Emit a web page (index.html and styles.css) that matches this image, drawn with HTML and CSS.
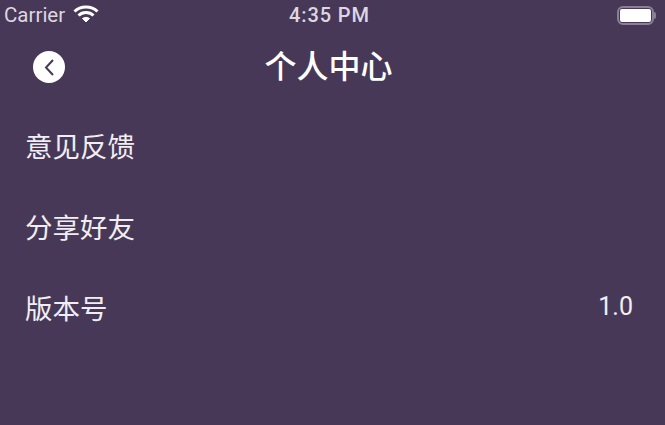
FILE: index.html
```html
<!DOCTYPE html>
<html>
<head>
    <title>个人中心</title>
    <link rel="stylesheet" href="styles.css">
</head>
<body>
    <div class="status-bar">
        <div class="status-left">
            <span class="carrier">Carrier</span>
            <svg class="wifi" width="26" height="19" viewBox="0 0 26 19">
                <path d="M1.5 7.5 C7.5 1.5 18.5 1.5 24.5 7.5" fill="none" stroke="#fff" stroke-width="3"/>
                <path d="M5.5 11.5 C9.5 7.5 16.5 7.5 20.5 11.5" fill="none" stroke="#fff" stroke-width="3"/>
                <path d="M9.5 14.5 C11.5 13 14.5 13 16.5 14.5 L13 18 Z" fill="#fff" stroke="#fff" stroke-width="1"/>
            </svg>
        </div>
        <span class="time">4:35 PM</span>
        <div class="battery">
            <div class="battery-body"><div class="battery-level"></div></div>
            <div class="battery-cap"></div>
        </div>
    </div>
    <div class="nav-bar">
        <div class="back-button">
            <svg width="32" height="32" viewBox="0 0 32 32">
                <circle cx="16" cy="16" r="16" fill="#fff"/>
                <path d="M20 9 L13 16.5 L20 24" fill="none" stroke="#483858" stroke-width="2"/>
            </svg>
        </div>
        <h1 class="nav-title">个人中心</h1>
    </div>
    <div class="menu">
        <div class="menu-row"><span>意见反馈</span></div>
        <div class="menu-row"><span>分享好友</span></div>
        <div class="menu-row"><span>版本号</span><span class="version">1.0</span></div>
    </div>
</body>
</html>
```

FILE: styles.css
```css
html, body {
    height: 100%;
}

body {
    margin: 0;
    background: #483858;
    color: #f1eef3;
    font-family: "Roboto", "Noto Sans CJK SC", sans-serif;
    overflow: hidden;
}

.status-bar {
    height: 32px;
    display: flex;
    align-items: center;
    justify-content: space-between;
    padding: 0 9px 2px 4px;
    box-sizing: border-box;
    position: relative;
}

.status-left {
    display: flex;
    align-items: center;
    gap: 8px;
}

.carrier {
    font-size: 20.5px;
    color: #dcd7e0;
}

.wifi {
    margin-top: -3px;
}

.time {
    position: absolute;
    left: 289px;
    font-size: 20px;
    font-weight: 500;
    letter-spacing: 0.9px;
    color: #dcd7e0;
}

.battery {
    display: flex;
    align-items: center;
}

.battery-body {
    width: 37px;
    height: 19px;
    box-sizing: border-box;
    border: 2px solid #8a7f94;
    border-radius: 6px;
    padding: 1px;
}

.battery-level {
    height: 100%;
    background: #fff;
    border-radius: 2px;
}

.battery-cap {
    width: 2px;
    height: 7px;
    background: #8a7f94;
    border-radius: 0 2px 2px 0;
}

.nav-bar {
    height: 70px;
    display: flex;
    align-items: center;
    justify-content: center;
    position: relative;
}

.back-button {
    position: absolute;
    left: 33px;
    top: 19px;
    line-height: 0;
}

.nav-title {
    margin: 0 0 7px;
    font-size: 32px;
    font-weight: 500;
    color: #fff;
    transform: translateX(-4px);
}

.menu {
    padding: 2px 32px 0 25px;
}

.menu-row {
    height: 81px;
    display: flex;
    align-items: center;
    justify-content: space-between;
    font-size: 27.5px;
}

.version {
    font-size: 25px;
}
```
